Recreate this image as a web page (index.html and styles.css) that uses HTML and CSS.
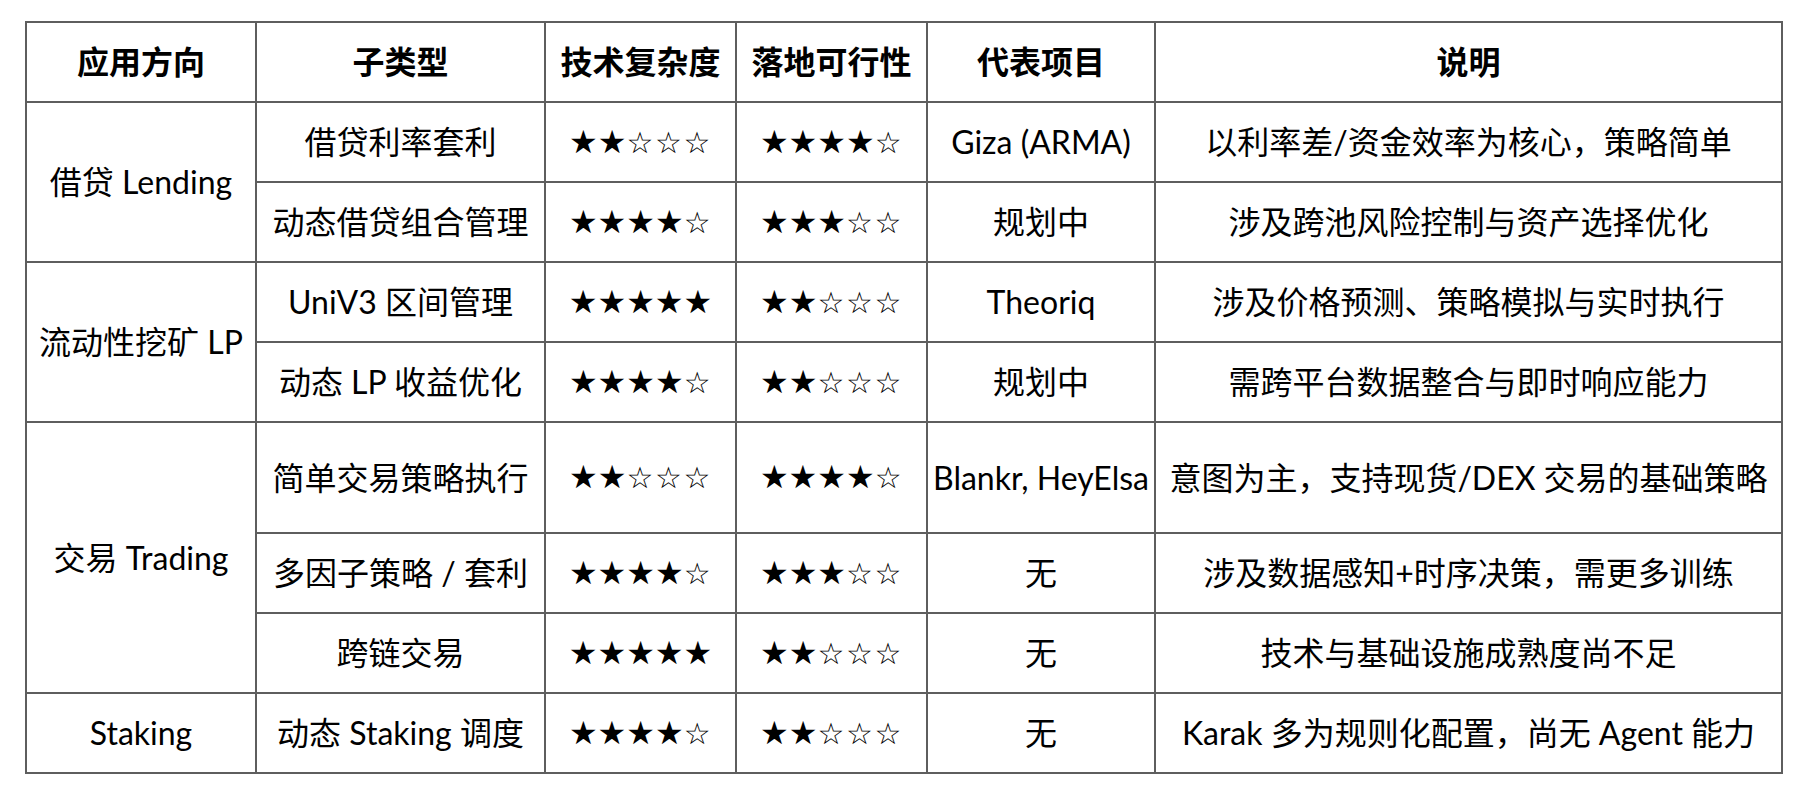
FILE: index.html
```html
<!DOCTYPE html>
<html lang="zh-CN">
<head>
<meta charset="utf-8">
<title>AI Agent DeFi 应用方向</title>
<link rel="stylesheet" href="styles.css">
</head>
<body>
<table class="grid">
  <colgroup>
    <col class="c1"><col class="c2"><col class="c3"><col class="c4"><col class="c5"><col class="c6">
  </colgroup>
  <thead>
    <tr class="row">
      <th>应用方向</th><th>子类型</th><th>技术复杂度</th><th>落地可行性</th><th>代表项目</th><th>说明</th>
    </tr>
  </thead>
  <tbody>
    <tr class="row">
      <td rowspan="2">借贷 Lending</td>
      <td>借贷利率套利</td>
      <td class="stars"><span class="f">★★</span><span class="e">☆☆☆</span></td>
      <td class="stars"><span class="f">★★★★</span><span class="e">☆</span></td>
      <td>Giza (ARMA)</td>
      <td>以利率差/资金效率为核心，策略简单</td>
    </tr>
    <tr class="row">
      <td>动态借贷组合管理</td>
      <td class="stars"><span class="f">★★★★</span><span class="e">☆</span></td>
      <td class="stars"><span class="f">★★★</span><span class="e">☆☆</span></td>
      <td>规划中</td>
      <td>涉及跨池风险控制与资产选择优化</td>
    </tr>
    <tr class="row">
      <td rowspan="2">流动性挖矿 LP</td>
      <td>UniV3 区间管理</td>
      <td class="stars"><span class="f">★★★★★</span></td>
      <td class="stars"><span class="f">★★</span><span class="e">☆☆☆</span></td>
      <td>Theoriq</td>
      <td>涉及价格预测、策略模拟与实时执行</td>
    </tr>
    <tr class="row">
      <td>动态 LP 收益优化</td>
      <td class="stars"><span class="f">★★★★</span><span class="e">☆</span></td>
      <td class="stars"><span class="f">★★</span><span class="e">☆☆☆</span></td>
      <td>规划中</td>
      <td>需跨平台数据整合与即时响应能力</td>
    </tr>
    <tr class="row tall">
      <td rowspan="3">交易 Trading</td>
      <td>简单交易策略执行</td>
      <td class="stars"><span class="f">★★</span><span class="e">☆☆☆</span></td>
      <td class="stars"><span class="f">★★★★</span><span class="e">☆</span></td>
      <td>Blankr, HeyElsa</td>
      <td>意图为主，支持现货/DEX 交易的基础策略</td>
    </tr>
    <tr class="row">
      <td>多因子策略 / 套利</td>
      <td class="stars"><span class="f">★★★★</span><span class="e">☆</span></td>
      <td class="stars"><span class="f">★★★</span><span class="e">☆☆</span></td>
      <td>无</td>
      <td>涉及数据感知+时序决策，需更多训练</td>
    </tr>
    <tr class="row">
      <td>跨链交易</td>
      <td class="stars"><span class="f">★★★★★</span></td>
      <td class="stars"><span class="f">★★</span><span class="e">☆☆☆</span></td>
      <td>无</td>
      <td>技术与基础设施成熟度尚不足</td>
    </tr>
    <tr class="row">
      <td>Staking</td>
      <td>动态 Staking 调度</td>
      <td class="stars"><span class="f">★★★★</span><span class="e">☆</span></td>
      <td class="stars"><span class="f">★★</span><span class="e">☆☆☆</span></td>
      <td>无</td>
      <td>Karak 多为规则化配置，尚无 Agent 能力</td>
    </tr>
  </tbody>
</table>
</body>
</html>
```

FILE: styles.css
```css
html, body {
  margin: 0;
  padding: 0;
  background: #ffffff;
}

body {
  padding: 21px 0 0 25px;
  font-family: "Lato", "Noto Sans CJK SC", sans-serif;
  color: #000000;
}

.grid {
  border-collapse: collapse;
  table-layout: fixed;
  width: 1756px;
}

.c1 { width: 230px; }
.c2 { width: 289px; }
.c3 { width: 191px; }
.c4 { width: 191px; }
.c5 { width: 228px; }
.c6 { width: 627px; }

.grid th,
.grid td {
  border: 2px solid #5e5e5e;
  text-align: center;
  vertical-align: middle;
  padding: 0;
  font-size: 32px;
  line-height: 40px;
  white-space: nowrap;
  overflow: hidden;
}

.grid th {
  font-weight: 700;
}

.grid td {
  font-weight: 400;
}

.row {
  height: 80px;
}

.row.tall {
  height: 111px;
}

.stars {
  font-family: "DejaVu Sans", sans-serif;
}

.stars .f {
  font-size: 32px;
  letter-spacing: 0;
}

.stars .e {
  font-size: 30px;
  letter-spacing: 1.6px;
}
```
